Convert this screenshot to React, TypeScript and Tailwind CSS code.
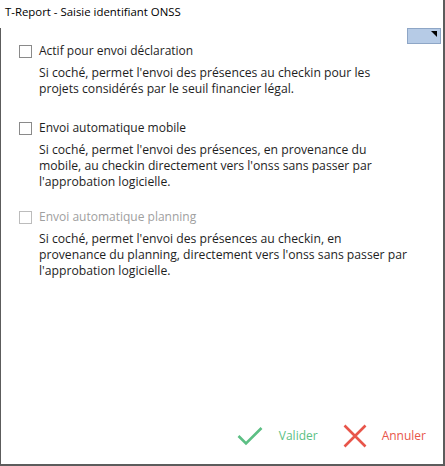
import React from "react";

function Box({ disabled }: { disabled?: boolean }) {
  return (
    <div
      className={
        "w-[13px] h-[13px] shrink-0 border bg-white " +
        (disabled ? "border-[#bcbcbc]" : "border-[#8a8a8a]")
      }
    />
  );
}

function Row({
  label,
  desc,
  disabled,
  className,
}: {
  label: string;
  desc: string[];
  disabled?: boolean;
  className?: string;
}) {
  return (
    <div className={"flex flex-col " + (className ?? "")}>
      <div className="flex items-center gap-[7px] h-[16px]">
        <Box disabled={disabled} />
        <span className={disabled ? "text-[#a0a0a0]" : "text-[#1e1e1e]"}>{label}</span>
      </div>
      <div className="pl-[20px] mt-[6px] leading-[16px] text-[12.2px] text-[#1e1e1e]">
        {desc.map((d, i) => (
          <div key={i}>{d}</div>
        ))}
      </div>
    </div>
  );
}

export default function App() {
  return (
    <div
      className="relative w-[445px] h-[466px] bg-white border-r-2 border-b-2 border-[#5c5c5c] flex flex-col text-[12px]"
      style={{ fontFamily: '"Open Sans", "Noto Sans", sans-serif' }}
    >
      <div className="h-[28px] pl-[5px] pt-[3px] text-[11.4px] text-black leading-[18px]">
        T-Report - Saisie identifiant ONSS
      </div>
      <div className="relative flex-1 flex flex-col border-l border-[#5c5c5c] pl-[18px] pt-[15px]">
        <div className="absolute right-[2px] top-0 w-[34px] h-[16px] bg-[#b6cbe6] border border-[#8ea6c6]">
          <div className="absolute right-[3px] top-[2px] w-0 h-0 border-t-[6px] border-t-black border-l-[6px] border-l-transparent" />
        </div>
        <div className="flex flex-col">
          <Row
            label="Actif pour envoi déclaration"
            desc={[
              "Si coché, permet l'envoi des présences au checkin pour les",
              "projets considérés par le seuil financier légal.",
            ]}
          />
          <Row
            className="mt-[23px]"
            label="Envoi automatique mobile"
            desc={[
              "Si coché, permet l'envoi des présences, en provenance du",
              "mobile, au checkin directement vers l'onss sans passer par",
              "l'approbation logicielle.",
            ]}
          />
          <Row
            className="mt-[19px]"
            disabled
            label="Envoi automatique planning"
            desc={[
              "Si coché, permet l'envoi des présences au checkin, en",
              "provenance du planning, directement vers l'onss sans passer par",
              "l'approbation logicielle.",
            ]}
          />
        </div>
        <div className="mt-auto mb-[16px] flex items-center justify-end pr-[17px] text-[12px]">
          <div className="flex items-center">
            <svg width="26" height="20" viewBox="0 0 26 20">
              <path d="M1.5 10 L9 17.5 L24.5 2" fill="none" stroke="#5cbf84" strokeWidth="2.6" />
            </svg>
            <span className="ml-[16px] text-[#5cbf84]">Valider</span>
          </div>
          <div className="flex items-center ml-[25px]">
            <svg width="24" height="24" viewBox="0 0 24 24">
              <path d="M1.5 1.5 L22.5 22.5 M22.5 1.5 L1.5 22.5" fill="none" stroke="#e8554a" strokeWidth="2.6" />
            </svg>
            <span className="ml-[15px] text-[#e8554a]">Annuler</span>
          </div>
        </div>
      </div>
    </div>
  );
}
